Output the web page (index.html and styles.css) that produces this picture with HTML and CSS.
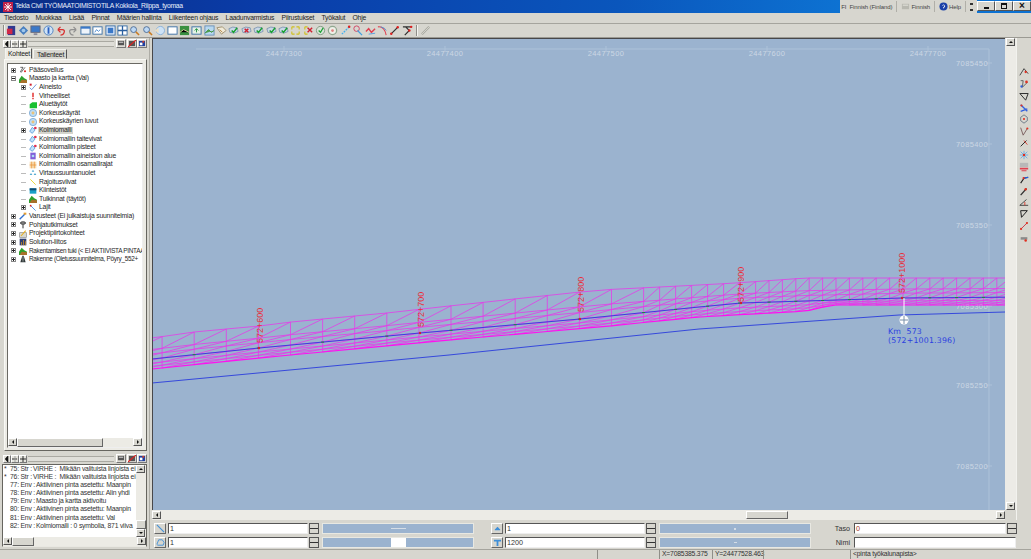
FILE: index.html
```html
<!DOCTYPE html>
<html lang="fi">
<head>
<meta charset="utf-8">
<title>Tekla Civil</title>
<link rel="stylesheet" href="styles.css">
</head>
<body>
<svg class="sprite" width="0" height="0" aria-hidden="true">
  <symbol id="t-page" viewBox="0 0 12 12"><rect x="1" y="2" width="10" height="8" fill="#eef4fb" stroke="#3a6ea5"/><rect x="1" y="2" width="10" height="2" fill="#3a78c8"/></symbol>
  <symbol id="t-win" viewBox="0 0 12 12"><rect x="1" y="2" width="10" height="8" fill="#fff" stroke="#3a6ea5"/><path d="M3 8l2-3 2 2 2-2" fill="none" stroke="#4a8ad0"/></symbol>
  <symbol id="t-check" viewBox="0 0 12 12"><path d="M1 4q4-3 9-1l1 4q-4 3-9 1z" fill="#c9d7e6" stroke="#5f7f9f" stroke-width=".7"/><path d="M4 6l2 2 4-5" fill="none" stroke="#18a030" stroke-width="1.6"/></symbol>
  <symbol id="t-cross" viewBox="0 0 12 12"><path d="M1 4q4-3 9-1l1 4q-4 3-9 1z" fill="#c9d7e6" stroke="#5f7f9f" stroke-width=".7"/><path d="M4 4l4 4M8 4l-4 4" stroke="#d02030" stroke-width="1.6"/></symbol>
  <symbol id="t-zoom" viewBox="0 0 12 12"><circle cx="5" cy="5" r="3.2" fill="#bcd8f4" stroke="#4a6a94"/><path d="M7.5 7.5l3.5 3.5" stroke="#c87a20" stroke-width="1.6"/></symbol>
  <symbol id="t-tool" viewBox="0 0 12 12"><path d="M2 10l8-8" stroke="#303030" stroke-width="1.3"/><circle cx="2.5" cy="9.5" r="1.3" fill="#e02020"/><circle cx="9.5" cy="2.5" r="1.3" fill="#e02020"/></symbol>
  <symbol id="r-a" viewBox="0 0 12 12"><path d="M1 10l5-8 5 6" fill="none" stroke="#404040" stroke-width="1.1"/><circle cx="8" cy="6" r="1.4" fill="#e03020"/></symbol>
  <symbol id="r-b" viewBox="0 0 12 12"><path d="M2 2h3l-1 8 6-6" fill="none" stroke="#505050"/><circle cx="9" cy="3.5" r="1.6" fill="#e03020"/><circle cx="3" cy="9" r="1.4" fill="#3060e0"/></symbol>
  <symbol id="r-c" viewBox="0 0 12 12"><path d="M1 3h10l-3 8z" fill="none" stroke="#303030" stroke-width="1.2"/></symbol>
  <symbol id="r-d" viewBox="0 0 12 12"><path d="M2 2l8 8M2 10l8-3" stroke="#3060e0" stroke-width="1.6"/><circle cx="3" cy="3" r="1.3" fill="#e03020"/></symbol>
  <symbol id="r-e" viewBox="0 0 12 12"><path d="M6 1l4 3v4l-4 3-4-3V4z" fill="none" stroke="#607080"/><circle cx="6" cy="6" r="1.3" fill="#e03020"/></symbol>
  <symbol id="r-f" viewBox="0 0 12 12"><path d="M2 2l3 9 5-8" fill="none" stroke="#705050"/><circle cx="10" cy="3" r="1.3" fill="#e03020"/></symbol>
  <symbol id="r-g" viewBox="0 0 12 12"><path d="M2 10l7-7" stroke="#303030" stroke-width="1.2"/><path d="M6 3l4 5" stroke="#e03020"/></symbol>
  <symbol id="r-h" viewBox="0 0 12 12"><path d="M6 1v10M1 6h10M2 2l8 8M10 2l-8 8" stroke="#40a0f0" stroke-width=".8"/><circle cx="6" cy="6" r="1.5" fill="#e03020"/></symbol>
  <symbol id="r-i" viewBox="0 0 12 12"><rect x="1" y="1" width="10" height="5" fill="#b8b8b8"/><path d="M1 7h10v2H1zM3 10h6v1H3z" fill="#e04050"/></symbol>
  <symbol id="r-j" viewBox="0 0 12 12"><path d="M2 11l4-6 5-1" fill="none" stroke="#202020" stroke-width="1.3"/><path d="M6 5l5-1" stroke="#2060e0" stroke-width="1.6"/><circle cx="5.5" cy="5" r="1.3" fill="#e03020"/></symbol>
  <symbol id="r-k" viewBox="0 0 12 12"><path d="M2 11l7-8" stroke="#303030" stroke-width="1.5"/><circle cx="8" cy="4" r="1.5" fill="#e03020"/></symbol>
  <symbol id="r-l" viewBox="0 0 12 12"><path d="M1 10h10M1 10l8-7" stroke="#404040" stroke-width="1.1"/><path d="M7 6v4" stroke="#e03020"/></symbol>
  <symbol id="r-m" viewBox="0 0 12 12"><path d="M2 2h8L3 10z" fill="none" stroke="#202020" stroke-width="1.2"/></symbol>
  <symbol id="r-n" viewBox="0 0 12 12"><path d="M2 10l8-8" stroke="#d04050" stroke-width="1.2"/><circle cx="2.5" cy="9.5" r="1.3" fill="#e03020"/><circle cx="9.5" cy="2.5" r="1.3" fill="#e03020"/></symbol>
  <symbol id="r-o" viewBox="0 0 12 12"><path d="M2 5h8v3H2z" fill="#8a8a8a"/><circle cx="8" cy="9" r="1.5" fill="#e03020"/></symbol>
  <symbol id="n-mesh" viewBox="0 0 12 12"><path d="M1 8l4-6 4 4-4 5z" fill="#bfe0fa" stroke="#3e86d0"/><circle cx="9.5" cy="3" r="2" fill="#e03050"/></symbol>
  <symbol id="n-terrain" viewBox="0 0 12 12"><path d="M0 12V7l4-6 4 4 4 2v5z" fill="#2ea02e"/><path d="M1 12l3-5 8 1v4z" fill="#a8702a"/></symbol>
  <symbol id="n-disc" viewBox="0 0 12 12"><circle cx="6" cy="6" r="5.5" fill="#bcdcf6" stroke="#6a9ccc"/><circle cx="6" cy="6" r="2.2" fill="#e9c27a"/></symbol>
  <symbol id="n-line" viewBox="0 0 12 12"><path d="M2 2l8 8" stroke="#e8d020" stroke-width="1.3"/></symbol>
  <symbol id="b-l" viewBox="0 0 7 7"><path d="M5 0v7H4L1 3.5 4 0z" fill="#111"/></symbol>
  <symbol id="b-m" viewBox="0 0 7 7"><path d="M0 3.5h6" stroke="#111"/><path d="M3.5 0v7" stroke="#999"/></symbol>
  <symbol id="b-p" viewBox="0 0 7 7"><path d="M0 3.5h7M3.5 0v7" stroke="#111"/></symbol>
  <symbol id="b-1" viewBox="0 0 9 8"><rect x="1" y="1" width="7" height="5" fill="#555"/><rect x="2" y="2" width="5" height="1" fill="#eee"/></symbol>
  <symbol id="b-2" viewBox="0 0 9 8"><rect x="1" y="1" width="7" height="6" fill="#555"/><path d="M0 8l9-8" stroke="#e02020" stroke-width="1.2"/></symbol>
  <symbol id="b-3" viewBox="0 0 9 8"><rect x="1" y="1" width="7" height="6" fill="#2040a0"/><rect x="2" y="3" width="3" height="3" fill="#fff"/><rect x="5" y="1" width="2" height="2" fill="#e04020"/></symbol>
</svg>

<header class="titlebar">
  <svg class="app-logo" viewBox="0 0 10 10"><rect width="10" height="10" fill="#c02048"/><path d="M5 1v8M1 5h8M2 2l6 6M8 2l-6 6" stroke="#fff" stroke-width=".9"/></svg>
  <span class="title-text">Tekla Civil TYÖMAATOIMISTOTILA Kokkola_Riippa_tyomaa</span>
  <div class="langbar">
    <span class="lang-code">FI</span><span class="lang-item">Finnish (Finland)</span>
    <span class="lang-sep"></span>
    <svg class="lang-ic" viewBox="0 0 10 10"><rect x="1" y="2" width="8" height="6" fill="#b8b8b0"/><rect x="2" y="3" width="6" height="1" fill="#e8e8e0"/></svg><span class="lang-item">Finnish</span>
    <span class="lang-sep"></span>
    <svg class="lang-ic" viewBox="0 0 10 10"><circle cx="5" cy="5" r="4.5" fill="#1c40a8"/><path d="M4 4q1-2 2 0t-1 2v1" fill="none" stroke="#fff"/></svg><span class="lang-item">Help</span>
    <span class="lang-sep"></span>
    <span class="lang-arrows"></span>
  </div>
  <div class="winbtns">
    <button class="winbtn"><span class="win-min"></span></button>
    <button class="winbtn"><span class="win-res"></span></button>
    <button class="winbtn win-x">×</button>
  </div>
</header>

<nav class="menubar">
  <span>Tiedosto</span><span>Muokkaa</span><span>Lisää</span><span>Pinnat</span><span>Määrien hallinta</span><span>Liikenteen ohjaus</span><span>Laadunvarmistus</span><span>Piirustukset</span><span>Työkalut</span><span>Ohje</span>
</nav>

<div class="toolbar">
  <span class="tb-sep"></span>
  <svg class="tb-ic" viewBox="0 0 12 12"><rect x="2" y="1" width="8" height="10" fill="#303a90"/><rect x="1" y="4" width="6" height="6" fill="#d02848"/></svg>
  <svg class="tb-ic" viewBox="0 0 12 12"><path d="M6 1l5 5-5 5-5-5z" fill="#4a80c0"/><circle cx="6" cy="6" r="2" fill="#a0c8ec"/></svg>
  <svg class="tb-ic" viewBox="0 0 12 12"><rect x="1" y="1" width="10" height="7" fill="#3a78c8" stroke="#667"/><rect x="4" y="9" width="4" height="2" fill="#889"/></svg>
  <svg class="tb-ic" viewBox="0 0 12 12"><circle cx="6" cy="6" r="5" fill="#cfe2f6" stroke="#4a80c0"/><rect x="5" y="2.5" width="2" height="7" fill="#2a60c0"/></svg>
  <svg class="tb-ic" viewBox="0 0 12 12"><path d="M3 5h5q3 0 2 3t-4 3M3 5l3-3M3 5l3 3" fill="none" stroke="#d83030" stroke-width="1.4"/></svg>
  <svg class="tb-ic" viewBox="0 0 12 12"><path d="M9 5H4q-3 0-2 3t4 3M9 5L6 2m3 3L6 8" fill="none" stroke="#909090" stroke-width="1.4"/></svg>
  <svg class="tb-ic"><use href="#t-page"/></svg>
  <svg class="tb-ic"><use href="#t-win"/></svg>
  <svg class="tb-ic" viewBox="0 0 12 12"><rect x="1" y="1" width="10" height="10" fill="#dfeafa" stroke="#3a6ea5"/><rect x="3" y="3" width="6" height="6" fill="#3a78c8"/></svg>
  <svg class="tb-ic" viewBox="0 0 12 12"><rect x="1" y="1" width="10" height="10" fill="#fff" stroke="#3a6ea5"/><path d="M1 6h10M6 1v10" stroke="#2a60a0" stroke-width="1.4"/></svg>
  <svg class="tb-ic"><use href="#t-zoom"/></svg>
  <svg class="tb-ic"><use href="#t-zoom"/></svg>
  <svg class="tb-ic" viewBox="0 0 12 12"><circle cx="7" cy="6" r="4.5" fill="#cde2f6" stroke="#8ab0d8"/><path d="M1 6l4-3v6z" fill="#f0e0c0"/></svg>
  <svg class="tb-ic" viewBox="0 0 12 12"><rect x="1" y="2" width="10" height="8" fill="#fff" stroke="#3a6ea5"/></svg>
  <svg class="tb-ic" viewBox="0 0 12 12"><rect x="1" y="1" width="10" height="10" fill="#3a9040"/><path d="M1 8l4-3 6 3" stroke="#e8e0a0"/></svg>
  <svg class="tb-ic" viewBox="0 0 12 12"><rect x="1" y="2" width="10" height="8" fill="#e6f2e6" stroke="#3a6ea5"/><path d="M6 8V4M4 6l2-2 2 2" fill="none" stroke="#209040"/></svg>
  <svg class="tb-ic" viewBox="0 0 12 12"><rect x="1" y="1" width="10" height="10" fill="#b8d8f0" stroke="#6a90b8"/><path d="M1 9l4-4 3 3 3-2" fill="#50a050" stroke="#409040"/></svg>
  <svg class="tb-ic" viewBox="0 0 12 12"><path d="M1 3l6-1 4 4-5 4z" fill="#f0ead8" stroke="#a09070"/><path d="M4 5l3 3" stroke="#b08040"/></svg>
  <svg class="tb-ic"><use href="#t-check"/></svg>
  <svg class="tb-ic"><use href="#t-cross"/></svg>
  <svg class="tb-ic"><use href="#t-check"/></svg>
  <svg class="tb-ic"><use href="#t-check"/></svg>
  <svg class="tb-ic"><use href="#t-check"/></svg>
  <svg class="tb-ic" viewBox="0 0 12 12"><path d="M2 2h3M2 2v3M10 2H7M10 2v3M2 10h3M2 10V7M10 10H7M10 10V7" stroke="#d0c020" stroke-width="1.2"/></svg>
  <svg class="tb-ic" viewBox="0 0 12 12"><path d="M2 2h3M2 2v3M2 10h3M2 10V7" stroke="#d0c020" stroke-width="1.2"/><path d="M5 3l5 5M10 3L5 8" stroke="#d02030" stroke-width="1.5"/></svg>
  <svg class="tb-ic" viewBox="0 0 12 12"><circle cx="6" cy="6" r="4.5" fill="#d8e4d8" stroke="#809880"/><path d="M4 6l2 2 3-5" fill="none" stroke="#18a030" stroke-width="1.4"/></svg>
  <svg class="tb-ic" viewBox="0 0 12 12"><circle cx="6" cy="6" r="4.5" fill="#eef0e8" stroke="#90a890" stroke-width="1.4"/><circle cx="6" cy="6" r="1.5" fill="#e08080"/></svg>
  <svg class="tb-ic" viewBox="0 0 12 12"><path d="M2 10l8-8" stroke="#40b0f0" stroke-width="1.4" stroke-dasharray="2 1"/><circle cx="10" cy="2" r="1.4" fill="#e02020"/></svg>
  <svg class="tb-ic" viewBox="0 0 12 12"><circle cx="5" cy="4" r="3" fill="none" stroke="#d04060"/><path d="M6 6l5 5" stroke="#40a0e0" stroke-width="1.4"/></svg>
  <svg class="tb-ic" viewBox="0 0 12 12"><path d="M1 7l3-3 3 4 4-4" fill="none" stroke="#e04050" stroke-width="1.5"/><path d="M4 10l7-1" stroke="#50a0e0"/></svg>
  <svg class="tb-ic" viewBox="0 0 12 12"><path d="M1 2q7-1 9 9" fill="none" stroke="#e04050" stroke-width="1.2"/><path d="M4 2q5 1 6 4" fill="none" stroke="#5090d0"/></svg>
  <svg class="tb-ic"><use href="#t-tool"/></svg>
  <svg class="tb-ic" viewBox="0 0 12 12"><path d="M1 2h10M4 2l4 4-5 5" fill="none" stroke="#303030" stroke-width="1.3"/><circle cx="8" cy="6" r="1.4" fill="#e02020"/><circle cx="10" cy="2" r="1.3" fill="#e02020"/></svg>
  <span class="tb-sep tb-sep-gap"></span>
  <svg class="tb-ic" viewBox="0 0 12 12"><path d="M2 10l8-8" stroke="#a8a8a0" stroke-width="2.4"/><path d="M2 10l8-8" stroke="#e4e4dc" stroke-width=".8"/></svg>
</div>

<main class="workspace">
  <aside class="sidebar">
    <div class="minibar">
      <svg class="mb"><use href="#b-l"/></svg><svg class="mb"><use href="#b-m"/></svg><svg class="mb"><use href="#b-p"/></svg>
      <span class="mb-track"></span>
      <svg class="mb-w"><use href="#b-1"/></svg><svg class="mb-w"><use href="#b-2"/></svg><svg class="mb-w"><use href="#b-3"/></svg>
    </div>
    <div class="tabs">
      <span class="tab tab-on">Kohteet</span><span class="tab">Tallenteet</span>
    </div>
    <section class="tabpanel">
      <div class="tree">
        <ul class="tree-list">
          <li class="node"><i class="exp"></i><svg class="ni" viewBox="0 0 12 12"><path d="M2 2h4L2 9M9 2l-6 8" stroke="#222" fill="none"/><circle cx="9" cy="8" r="1.5" fill="#e02020"/></svg><span>Pääsovellus</span></li>
          <li class="node"><i class="exp open"></i><svg class="ni"><use href="#n-terrain"/></svg><span>Maasto ja kartta (Val)</span></li>
          <li class="node l2"><i class="exp"></i><svg class="ni" viewBox="0 0 12 12"><path d="M1 7l3 3 7-8" fill="none" stroke="#5080d0" stroke-width="1.2"/><rect x="1" y="1" width="3" height="3" fill="#d02030"/></svg><span>Aineisto</span></li>
          <li class="node l2"><i class="noexp"></i><svg class="ni" viewBox="0 0 12 12"><path d="M5 1h2v7H5zM5 9h2v2H5z" fill="#e01818"/></svg><span>Virheelliset</span></li>
          <li class="node l2"><i class="noexp"></i><svg class="ni" viewBox="0 0 12 12"><path d="M1 11V5l4-3h7v9z" fill="#18c030"/></svg><span>Aluetäytöt</span></li>
          <li class="node l2"><i class="noexp"></i><svg class="ni"><use href="#n-disc"/></svg><span>Korkeuskäyrät</span></li>
          <li class="node l2"><i class="noexp"></i><svg class="ni"><use href="#n-disc"/></svg><span>Korkeuskäyrien luvut</span></li>
          <li class="node l2 sel"><i class="exp"></i><svg class="ni"><use href="#n-mesh"/></svg><span>Kolmiomalli</span></li>
          <li class="node l2"><i class="noexp"></i><svg class="ni"><use href="#n-mesh"/></svg><span>Kolmiomallin taitevivat</span></li>
          <li class="node l2"><i class="noexp"></i><svg class="ni"><use href="#n-mesh"/></svg><span>Kolmiomallin pisteet</span></li>
          <li class="node l2"><i class="noexp"></i><svg class="ni" viewBox="0 0 12 12"><rect x="2" y="1" width="8" height="10" fill="#8060d8"/><circle cx="6" cy="6" r="2" fill="#a8dcf4"/></svg><span>Kolmiomallin aineiston alue</span></li>
          <li class="node l2"><i class="noexp"></i><svg class="ni" viewBox="0 0 12 12"><path d="M1 1h10v10H1z" fill="#f8dcb0"/><path d="M4 1v10M8 1v10M1 6h10" stroke="#e89030"/></svg><span>Kolmiomallin osamallirajat</span></li>
          <li class="node l2"><i class="noexp"></i><svg class="ni" viewBox="0 0 12 12"><path d="M6 1l2 3H4zM3 6l2 3H1zM9 6l2 3H7z" fill="#50a8d0"/></svg><span>Virtaussuuntanuolet</span></li>
          <li class="node l2"><i class="noexp"></i><svg class="ni"><use href="#n-line"/></svg><span>Rajoitusviivat</span></li>
          <li class="node l2"><i class="noexp"></i><svg class="ni" viewBox="0 0 12 12"><rect x="1" y="2" width="10" height="8" fill="#18a0c8"/><rect x="1" y="2" width="10" height="3" fill="#104870"/></svg><span>Kiinteistöt</span></li>
          <li class="node l2"><i class="noexp"></i><svg class="ni"><use href="#n-terrain"/></svg><span>Tulkinnat (täytöt)</span></li>
          <li class="node l2"><i class="exp"></i><svg class="ni" viewBox="0 0 12 12"><path d="M2 2l8 8" stroke="#3080e0" stroke-width="1.2"/><circle cx="2.5" cy="2.5" r="1.3" fill="#e02020"/></svg><span>Lajit</span></li>
          <li class="node"><i class="exp"></i><svg class="ni" viewBox="0 0 12 12"><path d="M1 11l8-8" stroke="#3070d0" stroke-width="2"/><rect x="7" y="1" width="4" height="3" fill="#e8a030"/></svg><span>Varusteet (Ei julkaistuja suunnitelmia)</span></li>
          <li class="node"><i class="exp"></i><svg class="ni" viewBox="0 0 12 12"><path d="M6 5v6" stroke="#222" stroke-width="1.4"/><ellipse cx="6" cy="3" rx="4" ry="2" fill="#888" stroke="#222"/></svg><span>Pohjatutkimukset</span></li>
          <li class="node"><i class="exp"></i><svg class="ni" viewBox="0 0 12 12"><rect x="1" y="4" width="10" height="7" fill="#d8d8d0" stroke="#888"/><path d="M3 9l7-8" stroke="#e8b020" stroke-width="1.6"/></svg><span>Projektipiirtokohteet</span></li>
          <li class="node"><i class="exp"></i><svg class="ni" viewBox="0 0 12 12"><rect x="1" y="1" width="10" height="10" fill="#304070"/><path d="M3 11V6h1v5zM6 11V3h1v8zM9 11V5h1v6z" fill="#e8a020"/></svg><span>Solution-liitos</span></li>
          <li class="node tight"><i class="exp"></i><svg class="ni"><use href="#n-terrain"/></svg><span>Rakentamisen tuki (&lt; EI AKTIIVISTA PINTAA</span></li>
          <li class="node tight"><i class="exp"></i><svg class="ni" viewBox="0 0 12 12"><path d="M5 1h2l3 10H2z" fill="#303838"/><path d="M6 2v8" stroke="#c0c8c8"/></svg><span>Rakenne (Oletussuunnitelma, Pöyry_552+</span></li>
        </ul>
        <div class="tree-hscroll">
          <button class="sb-btn sb-left"></button>
          <span class="tree-hthumb"></span>
          <span class="sb-fill"></span>
          <button class="sb-btn sb-right"></button>
        </div>
      </div>
    </section>
    <div class="minibar minibar-low">
      <svg class="mb"><use href="#b-l"/></svg><svg class="mb"><use href="#b-m"/></svg><svg class="mb"><use href="#b-p"/></svg>
      <span class="mb-track"></span>
      <svg class="mb-w"><use href="#b-1"/></svg><svg class="mb-w"><use href="#b-2"/></svg><svg class="mb-w"><use href="#b-3"/></svg>
    </div>
    <section class="log">
      <div class="log-body">
        <ul class="log-list">
          <li><b>*</b><span class="log-n log-s">75: Str :</span><span>VIRHE :&nbsp; Mikään valituista linjoista ei</span></li>
          <li><b>*</b><span class="log-n log-s">76: Str :</span><span>VIRHE :&nbsp; Mikään valituista linjoista ei</span></li>
          <li><b></b><span class="log-n">77: Env :</span><span>Aktiivinen pinta asetettu: Maanpin</span></li>
          <li><b></b><span class="log-n">78: Env :</span><span>Aktiivinen pinta asetettu: Alin yhdi</span></li>
          <li><b></b><span class="log-n">79: Env :</span><span>Maasto ja kartta aktivoitu</span></li>
          <li><b></b><span class="log-n">80: Env :</span><span>Aktiivinen pinta asetettu: Maanpin</span></li>
          <li><b></b><span class="log-n">81: Env :</span><span>Aktiivinen pinta asetettu: Val</span></li>
          <li><b></b><span class="log-n">82: Env :</span><span>Kolmiomalli : 0 symbolia, 871 viiva</span></li>
        </ul>
        <div class="log-vscroll">
          <button class="sb-btn sb-up"></button>
          <span class="log-vtrack"><span class="log-vthumb"></span></span>
          <button class="sb-btn sb-down"></button>
        </div>
      </div>
      <div class="log-hscroll">
        <button class="sb-btn sb-left"></button>
        <span class="log-hthumb"></span>
        <span class="sb-fill"></span>
        <button class="sb-btn sb-right"></button>
      </div>
    </section>
  </aside>

  <div class="center">
    <div class="upper">
      <div class="viewcol">
        <div class="canvas">
          <svg id="drawing" class="drawing" viewBox="153 38 853 472" xmlns="http://www.w3.org/2000/svg">
            <g class="grid">
              <path d="M197 49H990M990 49V510M285 46v6M446 46v6M607 46v6M768 46v6M929 46v6M987 63h6M987 144h6M987 225h6M987 306h6M987 385h6M987 466h6"/>
            </g>
            <g class="grid-text">
              <text x="285" y="56">24477300</text>
              <text x="446" y="56">24477400</text>
              <text x="607" y="56">24477500</text>
              <text x="768" y="56">24477600</text>
              <text x="929" y="56">24477700</text>
              <text class="ry" x="973" y="66">7085450</text>
              <text class="ry" x="973" y="147">7085400</text>
              <text class="ry" x="973" y="228">7085350</text>
              <text class="ry" x="973" y="309">7085300</text>
              <text class="ry" x="973" y="388">7085250</text>
              <text class="ry" x="973" y="469">7085200</text>
            </g>
            <g id="mesh"></g>
            <g class="st-labels">
              <text transform="translate(264,343) rotate(-90)">572+600</text>
              <text transform="translate(425,327) rotate(-90)">572+700</text>
              <text transform="translate(585,312) rotate(-90)">572+800</text>
              <text transform="translate(745,302) rotate(-90)">572+900</text>
              <text transform="translate(906,293) rotate(-90)">572+1000</text>
            </g>
            <path class="pointer-line" d="M905 298V320"/>
            <circle class="pointer" cx="905" cy="320" r="4.5"/>
            <path class="pointer-mark" d="M901 320h8M905 316v8"/>
            <g class="km-text">
              <text x="889" y="334">Km&#160; 573</text>
              <text x="889" y="343">(572+1001.396)</text>
            </g>
          </svg>
        </div>
        <div class="hscroll">
          <button class="sb-btn sb-left"></button>
          <span class="hthumb"></span>
          <button class="sb-btn sb-right"></button>
        </div>
      </div>
      <div class="vscroll">
        <button class="sb-btn sb-up"></button>
        <button class="sb-btn sb-down"></button>
      </div>
      <div class="righttools">
        <svg class="rt"><use href="#r-a"/></svg><svg class="rt"><use href="#r-b"/></svg><svg class="rt"><use href="#r-c"/></svg><svg class="rt"><use href="#r-d"/></svg><svg class="rt"><use href="#r-e"/></svg>
        <svg class="rt"><use href="#r-f"/></svg><svg class="rt"><use href="#r-g"/></svg><svg class="rt"><use href="#r-h"/></svg><svg class="rt"><use href="#r-i"/></svg><svg class="rt"><use href="#r-j"/></svg>
        <svg class="rt"><use href="#r-k"/></svg><svg class="rt"><use href="#r-l"/></svg><svg class="rt"><use href="#r-m"/></svg><svg class="rt"><use href="#r-n"/></svg><svg class="rt"><use href="#r-o"/></svg>
      </div>
    </div>
    <div class="props">
      <div class="prop-col">
        <div class="prop-row">
          <span class="p-btn"><svg viewBox="0 0 10 10"><path d="M1 1l8 8" stroke="#3f8fd8" stroke-width="1.2"/></svg></span>
          <span class="p-input">1</span><span class="spin"></span>
          <span class="swatch"><i class="sw-line"></i></span>
        </div>
        <div class="prop-row">
          <span class="p-btn"><svg viewBox="0 0 10 10"><path d="M1 7l2-5h4l2 3-1 3H2z" fill="none" stroke="#3f8fd8"/></svg></span>
          <span class="p-input">1</span><span class="spin"></span>
          <span class="swatch"><i class="sw-fill"></i></span>
        </div>
      </div>
      <div class="prop-col">
        <div class="prop-row">
          <span class="p-btn"><svg viewBox="0 0 10 10"><path d="M5 3l3 3v1H2V6z" fill="#3f8fd8"/></svg></span>
          <span class="p-input">1</span><span class="spin"></span>
          <span class="swatch"><i class="sw-dot"></i></span>
        </div>
        <div class="prop-row">
          <span class="p-btn"><svg viewBox="0 0 10 10"><path d="M1 2h8v2H6v5H4V4H1z" fill="#3f8fd8"/></svg></span>
          <span class="p-input">1200</span><span class="spin"></span>
          <span class="swatch"><i class="sw-dash"></i></span>
        </div>
      </div>
      <div class="prop-col prop-named">
        <div class="prop-row">
          <label class="p-label">Taso</label>
          <span class="p-input p-wide p-red">0</span><span class="spin"></span>
        </div>
        <div class="prop-row">
          <label class="p-label">Nimi</label>
          <span class="p-input p-full"></span>
        </div>
      </div>
    </div>
  </div>
</main>

<footer class="status">
  <span class="st st-a"></span>
  <span class="st st-b"></span>
  <span class="st st-x">X=7085385.375</span>
  <span class="st st-y">Y=24477528.463</span>
  <span class="st st-e"></span>
  <span class="st st-m">&lt;pinta työkalunapista&gt;</span>
</footer>
<script src="app.js"></script>
</body>
</html>
```
FILE: styles.css
```css
* { box-sizing: border-box; }
html, body { margin: 0; height: 100%; }
body {
  width: 1031px; height: 559px; overflow: hidden;
  display: flex; flex-direction: column;
  background: #d7d6cf;
  font: 6.8px/1 "Liberation Sans", Arial, sans-serif;
  letter-spacing: -.2px;
  color: #2a2a2a;
}
.sprite { position: absolute; }
ul { list-style: none; margin: 0; padding: 0; }
button { margin: 0; padding: 0; font: inherit; }

/* title bar */
.titlebar {
  height: 13px; display: flex; align-items: center; padding-left: 3px;
  background: linear-gradient(90deg, #0a2c84 0, #0a3ca8 25%, #0a56bc 60%, #0d72d2 81.5%, #d7d6cf 81.5%);
}
.app-logo { width: 10px; height: 10px; }
.title-text { margin-left: 2px; color: #e8eefa; letter-spacing: -.28px; }
.langbar { margin-left: auto; display: flex; align-items: center; height: 13px; color: #444; font-size: 6px; letter-spacing: -.1px; margin-right: 3px; }
.lang-code { margin-right: 3px; }
.lang-sep { width: 1px; height: 11px; background: #b0afa8; margin: 0 4px; }
.lang-ic { width: 9px; height: 9px; margin-right: 1px; }
.lang-arrows { width: 3px; height: 8px; border-top: 2px solid #333; border-bottom: 2px solid #333; margin-right: 1px; }
.winbtns { display: flex; height: 13px; background: #0d72d2; padding: 1px 0 2px 0; width: 54px; }
.winbtn {
  width: 18px; height: 10px; border: 1px solid; border-color: #fff #555 #555 #fff; background: #d7d6cf;
  display: flex; align-items: center; justify-content: center; color: #111; font-size: 10px; font-weight: bold;
}
.win-min { width: 5px; height: 2px; background: #111; margin-top: 4px; }
.win-res { width: 6px; height: 6px; border: 1px solid #111; border-top-width: 2px; }

/* menu */
.menubar { height: 10px; display: flex; align-items: center; padding-left: 4px; gap: 7.25px; color: #222; }

/* main toolbar */
.toolbar {
  height: 15px; display: flex; align-items: center; padding-left: 3px;
  border-top: 1px solid #a5a49d; border-bottom: 1px solid #9b9a93;
  background: #d7d6cf;
}
.tb-sep { width: 2px; height: 11px; border-left: 1px solid #8f8e88; border-right: 1px solid #f4f4f0; }
.tb-sep-gap { margin-left: 3px; margin-right: 1px; }
.tb-ic { width: 11px; height: 11px; margin: 0 .7px; flex: none; }

/* workspace */
.workspace { flex: 1; display: flex; min-height: 0; }
.sidebar { width: 150px; display: flex; flex-direction: column; padding: 0 2px 0 2px; border-right: 1px solid #aeada6; }
.minibar { height: 9px; margin-top: 1px; display: flex; align-items: center; padding-left: 1px; }
.minibar-low { margin-top: 3px; }
.mb { width: 8px; height: 8px; background: #e4e3dc; border: 1px solid; border-color: #fff #777 #777 #fff; }
.mb-track { flex: 1; height: 6px; margin: 0 2px 0 1px; border-top: 1px solid #aaa9a2; border-bottom: 1px solid #aaa9a2; background: #dfded8; }
.mb-w { width: 10px; height: 9px; margin-left: .4px; background: #dedcd5; border: 1px solid; border-color: #fff #777 #777 #fff; }

.tabs { display: flex; height: 11px; padding: 0 0 0 3px; align-items: flex-end; }
.tab {
  width: 34px; height: 10px; padding: 2px 0 0 3px; background: #d7d6cf; border: 1px solid; border-color: #f4f4ef #555 transparent #f4f4ef; color: #222;
}
.tab-on { width: 27px; height: 11px; background: #ecebe5; padding-left: 2px; margin-right: 1px; }
.tabpanel { height: 392px; background: #ecebe5; border: 1px solid; border-color: #f8f8f4 #66655f #66655f #f8f8f4; padding: 3px 3px 2px 2px; margin-left: 2px; }
.tree { height: 100%; background: #fff; border: 1px solid; border-color: #6a6963 #eee #eee #6a6963; padding-top: 2px; overflow: hidden; display: flex; flex-direction: column; }
.tree-list { flex: 1; padding-left: 3px; overflow: hidden; }
.tree-hscroll { height: 9px; display: flex; background: #ecebe5; }
.tree-hthumb { width: 86px; background: #d7d6cf; border: 1px solid; border-color: #fff #666 #666 #fff; }
.node { height: 8.6px; display: flex; align-items: center; white-space: nowrap; color: #282828; }
.node.l2 { padding-left: 10px; }
.node.tight { font-size: 6.4px; letter-spacing: -.3px; }
.exp { width: 5px; height: 5px; border: 1px solid #888; margin-right: 3px; flex: none; background:
  linear-gradient(#222, #222) center / 3px 1px no-repeat,
  linear-gradient(#222, #222) center / 1px 3px no-repeat, #fff; }
.exp.open { background: linear-gradient(#222, #222) center / 3px 1px no-repeat, #fff; }
.noexp { width: 5px; height: 1px; margin-right: 3px; flex: none; background: #bbb; }
.ni { width: 8px; height: 8px; margin-right: 2px; flex: none; }
.node.sel span { background: #d5d4cd; padding: 0 1px; margin-left: -1px; }

.log { margin-top: 1px; flex: 1; background: #e9e8e2; border: 1px solid; border-color: #66655f #66655f transparent #66655f; display: flex; flex-direction: column; margin-bottom: 2px; }
.log-body { flex: 1; display: flex; background: #fff; min-height: 0; }
.log-list { flex: 1; padding: 0 0 0 1px; overflow: hidden; color: #333; min-width: 0; }
.log-list li { height: 8.15px; display: flex; align-items: center; white-space: nowrap; overflow: hidden; }
.log-list b { width: 5px; font-weight: normal; flex: none; }
.log-n { width: 27px; flex: none; padding-left: 1px; }
.log-s { width: 24px; }
.log-vscroll { width: 10px; flex: none; display: flex; flex-direction: column; background: #ecebe5; }
.log-vtrack { flex: 1; display: flex; flex-direction: column; justify-content: flex-end; }
.log-vthumb { height: 9px; background: #d7d6cf; border: 1px solid; border-color: #fff #666 #666 #fff; }
.log-hscroll { height: 9px; display: flex; background: #ecebe5; }
.log-hthumb { width: 22px; background: #d7d6cf; border: 1px solid; border-color: #fff #666 #666 #fff; }
.sb-fill { flex: 1; }

.sb-btn { width: 9px; height: 8px; background: #d7d6cf; border: 1px solid; border-color: #fff #555 #555 #fff; position: relative; flex: none; }
.sb-btn::after { content: ""; position: absolute; left: 50%; top: 50%; width: 0; height: 0; transform: translate(-50%, -50%); border: 2px solid transparent; }
.sb-up::after { border-bottom-color: #111; border-top-width: 0; }
.sb-down::after { border-top-color: #111; border-bottom-width: 0; }
.sb-left::after { border-right-color: #111; border-left-width: 0; }
.sb-right::after { border-left-color: #111; border-right-width: 0; }

.center { flex: 1; display: flex; flex-direction: column; padding-left: 2px; min-width: 0; }
.upper { height: 482px; display: flex; }
.viewcol { width: 853px; display: flex; flex-direction: column; }
.canvas { height: 472px; background: #9bb3cf; border-top: 1px solid #47474a; border-left: 1px solid #47474a; overflow: hidden; }
.drawing { display: block; width: 853px; height: 472px; margin: -1px 0 0 -1px; }
.hscroll { height: 10px; display: flex; justify-content: space-between; background: #ecebe6; padding-top: 1px; }
.hthumb { width: 42px; height: 8px; background: #d7d6cf; border: 1px solid; border-color: #fff #666 #666 #fff; margin-left: 376px; }
.vscroll { width: 11px; display: flex; flex-direction: column; justify-content: space-between; align-items: center; background: #ecebe6; height: 472px; }
.righttools { flex: 1; padding-top: 29px; display: flex; flex-direction: column; align-items: center; border-left: 1px solid #f2f2ee; }
.rt { width: 10px; height: 10px; margin-bottom: 1.87px; flex: none; }

/* property strip */
.props { height: 29px; display: flex; padding: 3px 0 0 2px; }
.prop-col { display: flex; flex-direction: column; gap: 3px; width: 337px; flex: none; }
.prop-named { width: auto; }
.prop-row { display: flex; align-items: center; height: 11px; }
.p-btn { width: 12px; height: 11px; background: #d7d6cf; border: 1px solid; border-color: #fff #666 #666 #fff; display: flex; }
.p-btn svg { width: 9px; height: 9px; margin: auto; }
.p-input { width: 140px; height: 11px; margin-left: 2px; background: #fff; border: 1px solid; border-color: #555 #eee #eee #555; padding: 1px 0 0 1px; font-size: 7.2px; letter-spacing: 0; color: #333; }
.p-wide { width: 152px; margin-left: 0; }
.p-full { width: 162px; margin-left: 0; }
.p-red { color: #a03020; }
.spin { width: 10px; height: 11px; margin-left: 1px; background: linear-gradient(#333, #333) center / 100% 1px no-repeat, #d7d6cf; border: 1px solid #555; }
.swatch { width: 152px; height: 11px; margin-left: 3px; background: #9bb3cf; border: 1px solid #e8e8e2; display: flex; align-items: center; justify-content: center; }
.sw-line { width: 15px; height: 1px; background: #d5dde6; }
.sw-fill { width: 15px; height: 9px; background: #fff; }
.sw-dot { width: 2px; height: 2px; background: #d5dde6; }
.sw-dash { width: 3px; height: 1px; background: #d5dde6; }
.p-label { width: 26px; text-align: right; padding-right: 4px; color: #333; font-size: 7.2px; letter-spacing: 0; }

/* status */
.status { height: 10px; display: flex; background: #d7d6cf; border-top: 1px solid #a5a49d; color: #333; }
.st { border-left: 1px solid #8f8e88; padding: 1px 0 0 2px; white-space: nowrap; }
.st-a { width: 597px; border-left: 0; }
.st-b { width: 62px; }
.st-x { width: 53px; }
.st-y { width: 51px; }
.st-e { width: 87px; }
.st-m { flex: 1; }

/* drawing */
.grid path { fill: none; stroke: #adc2d9; stroke-width: 1; }
.grid-text text { fill: #cbd7e4; font: 7.5px "Liberation Sans", sans-serif; text-anchor: middle; letter-spacing: .4px; }
.st-labels text { fill: #e8303c; font: 9px "Liberation Sans", sans-serif; letter-spacing: 0; }
.km-text text { fill: #2c3fe0; font: 7.8px "DejaVu Sans", sans-serif; letter-spacing: .2px; }
.pointer-line { stroke: #fff; stroke-width: 1; }
.pointer { fill: #fff; }
.pointer-mark { stroke: #7890a8; stroke-width: 1; }
.m-lines { fill: none; stroke: #e33ce8; stroke-width: .8; }
.m-bright { fill: none; stroke: #ff10f0; stroke-width: 1.2; }
.m-align { fill: none; stroke: #2a3cdc; stroke-width: .9; }
.m-green { stroke: #1a8a3a; stroke-width: 1; }
.m-red { fill: #d02030; }
```
FILE: app.js
```js
// Builds the triangulated surface drawn on the canvas from a few edge profiles.
(function () {
  var NS = "http://www.w3.org/2000/svg";
  var mesh = document.getElementById("mesh");
  var top = [[120, 342], [153, 338], [195, 332], [260, 326], [292, 322], [388, 313], [450, 306], [600, 290], [700, 285], [737, 283], [807, 278], [1030, 278]];
  var mid = [[120, 362], [153, 359], [260, 348], [421, 333], [581, 319], [700, 307], [742, 303], [903, 298], [1030, 297]];
  var bot = [[120, 372], [153, 369], [260, 358], [450, 340], [600, 327], [700, 317], [807, 311], [833, 305], [1030, 305]];
  var low = [[153, 383], [450, 355], [700, 329], [900, 315], [1006, 312]];

  function at(p, x) {
    for (var i = 1; i < p.length; i++) {
      if (x <= p[i][0]) {
        var t = (x - p[i - 1][0]) / (p[i][0] - p[i - 1][0]);
        return p[i - 1][1] + t * (p[i][1] - p[i - 1][1]);
      }
    }
    return p[p.length - 1][1];
  }
  var xs = [], x = 131;
  while (x < 1025) { xs.push(x); x += x < 640 ? 32.1 : x < 743 ? 16 : 13.4; }

  var fr = [
    function (v) { return at(top, v); },
    function (v) { var a = at(top, v); return a + 0.55 * (at(mid, v) - a); },
    function (v) { var a = at(top, v); return a + 0.76 * (at(mid, v) - a); },
    function (v) { return at(mid, v); },
    function (v) { var a = at(mid, v); return a + 0.4 * (at(bot, v) - a); },
    function (v) { var a = at(mid, v); return a + 0.72 * (at(bot, v) - a); },
    function (v) { return at(bot, v); }
  ];
  function f(n) { return n.toFixed(1); }
  var thin = "", bright = "", green = "", i, j;
  for (j = 0; j < fr.length; j++) {
    var line = "M" + f(xs[0]) + " " + f(fr[j](xs[0]));
    for (i = 1; i < xs.length; i++) line += "L" + f(xs[i]) + " " + f(fr[j](xs[i]));
    if (j >= 6) bright += line; else thin += line;
  }
  for (i = 0; i < xs.length; i++) {
    thin += "M" + f(xs[i]) + " " + f(fr[0](xs[i])) + "V" + f(fr[6](xs[i]));
    if (i + 1 < xs.length) {
      for (j = 0; j < fr.length - 1; j++) {
        thin += "M" + f(xs[i]) + " " + f(fr[j + 1](xs[i])) + "L" + f(xs[i + 1]) + " " + f(fr[j](xs[i + 1]));
      }
    }
    if (i % 2 === 0) green += "M" + f(xs[i] - 1.5) + " " + f(at(mid, xs[i])) + "h3";
  }
  function add(cls, d) {
    var el = document.createElementNS(NS, "path");
    el.setAttribute("class", cls);
    el.setAttribute("d", d);
    mesh.appendChild(el);
  }
  add("m-lines", thin);
  add("m-bright", bright);
  var al = "", lw = "";
  mid.forEach(function (p, n) { al += (n ? "L" : "M") + p[0] + " " + p[1]; });
  low.forEach(function (p, n) { lw += (n ? "L" : "M") + p[0] + " " + p[1]; });
  add("m-align", al);
  add("m-align", lw);
  add("m-green", green);
  [260, 421, 581, 742, 903].forEach(function (s) {
    var c = document.createElementNS(NS, "circle");
    c.setAttribute("class", "m-red");
    c.setAttribute("cx", s);
    c.setAttribute("cy", at(mid, s));
    c.setAttribute("r", 1.2);
    mesh.appendChild(c);
  });
})();
```
